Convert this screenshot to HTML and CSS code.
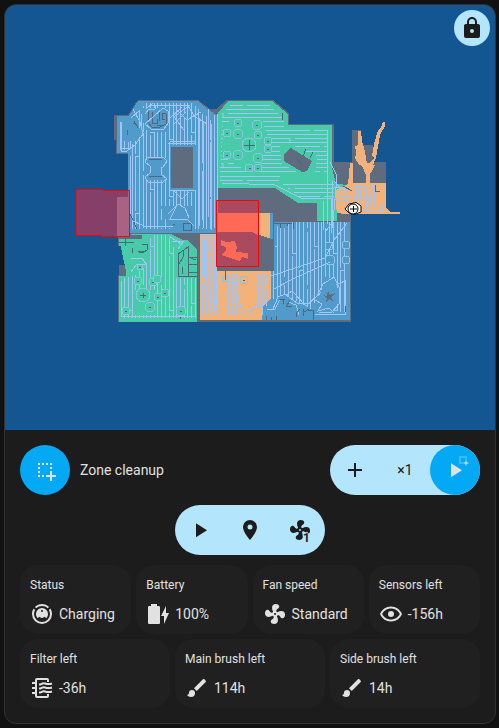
FILE: index.html
```html
<!DOCTYPE html>
<html lang="en">
<head>
<meta charset="utf-8">
<meta name="viewport" content="width=device-width, initial-scale=1">
<title>Vacuum map</title>
<link rel="stylesheet" href="styles.css">
</head>
<body>
<svg class="defs" aria-hidden="true">
  <symbol id="play" viewBox="0 0 24 24"><path d="M8,5.14V19.14L19,12.14L8,5.14Z"/></symbol>
  <symbol id="plus" viewBox="0 0 24 24"><path d="M19,13H13V19H11V13H5V11H11V5H13V11H19V13Z"/></symbol>
  <symbol id="lock" viewBox="0 0 24 24"><path d="M12,17A2,2 0 0,0 14,15C14,13.89 13.1,13 12,13A2,2 0 0,0 10,15A2,2 0 0,0 12,17M18,8A2,2 0 0,1 20,10V20A2,2 0 0,1 18,22H6A2,2 0 0,1 4,20V10C4,8.89 4.9,8 6,8H7V6A5,5 0 0,1 12,1A5,5 0 0,1 17,6V8H18M12,3A3,3 0 0,0 9,6V8H15V6A3,3 0 0,0 12,3Z"/></symbol>
  <symbol id="marker" viewBox="0 0 24 24"><path d="M12,11.5A2.5,2.5 0 0,1 9.5,9A2.5,2.5 0 0,1 12,6.5A2.5,2.5 0 0,1 14.5,9A2.5,2.5 0 0,1 12,11.5M12,2A7,7 0 0,0 5,9C5,14.25 12,22 12,22C12,22 19,14.25 19,9A7,7 0 0,0 12,2Z"/></symbol>
  <symbol id="fan" viewBox="0 0 24 24"><path d="M12,11A1,1 0 0,0 11,12A1,1 0 0,0 12,13A1,1 0 0,0 13,12A1,1 0 0,0 12,11M12.5,2C17,2 17.11,5.57 14.75,6.75C13.76,7.24 13.32,8.29 13.13,9.22C13.61,9.42 14.03,9.73 14.35,10.13C18.05,8.13 22.03,8.92 22.03,12.5C22.03,17 18.46,17.1 17.28,14.73C16.78,13.74 15.72,13.3 14.79,13.11C14.59,13.59 14.28,14 13.88,14.34C15.87,18.03 15.08,22 11.5,22C7,22 6.91,18.42 9.27,17.24C10.25,16.75 10.69,15.71 10.89,14.79C10.4,14.59 9.97,14.27 9.65,13.87C5.96,15.85 2,15.07 2,11.5C2,7 5.56,6.89 6.74,9.26C7.24,10.25 8.29,10.68 9.22,10.87C9.41,10.39 9.73,9.97 10.14,9.65C8.15,5.96 8.94,2 12.5,2Z"/></symbol>
  <symbol id="eye" viewBox="0 0 24 24"><path d="M12,9A3,3 0 0,1 15,12A3,3 0 0,1 12,15A3,3 0 0,1 9,12A3,3 0 0,1 12,9M12,4.5C17,4.5 21.27,7.61 23,12C21.27,16.39 17,19.5 12,19.5C7,19.5 2.73,16.39 1,12C2.73,7.61 7,4.5 12,4.5M3.18,12C4.83,15.36 8.24,17.5 12,17.5C15.76,17.5 19.17,15.36 20.82,12C19.17,8.64 15.76,6.5 12,6.5C8.24,6.5 4.83,8.64 3.18,12Z"/></symbol>
  <symbol id="brush" viewBox="0 0 24 24"><path d="M20.71,4.63L19.37,3.29C19,2.9 18.35,2.9 17.96,3.29L9,12.25L11.75,15L20.71,6.04C21.1,5.65 21.1,5 20.71,4.63M7,14A3,3 0 0,0 4,17C4,18.31 2.84,19 2,19C2.92,20.22 4.5,21 6,21A4,4 0 0,0 10,17A3,3 0 0,0 7,14Z"/></symbol>
  <symbol id="vacuum" viewBox="0 0 24 24"><path d="M12,2C14.65,2 17.19,3.06 19.07,4.93L17.65,6.35C16.15,4.85 14.12,4 12,4C9.88,4 7.84,4.84 6.35,6.35L4.93,4.93C6.81,3.06 9.35,2 12,2M3.66,6.5L5.11,7.94C4.39,9.17 4,10.57 4,12A8,8 0 0,0 12,20A8,8 0 0,0 20,12C20,10.57 19.61,9.17 18.88,7.94L20.34,6.5C21.42,8.12 22,10.04 22,12A10,10 0 0,1 12,22A10,10 0 0,1 2,12C2,10.04 2.58,8.12 3.66,6.5M12,6A6,6 0 0,1 18,12C18,13.59 17.37,15.12 16.24,16.24L14.83,14.83C14.08,15.58 13.06,16 12,16C10.94,16 9.92,15.58 9.17,14.83L7.76,16.24C6.63,15.12 6,13.59 6,12A6,6 0 0,1 12,6M12,8A1,1 0 0,0 11,9A1,1 0 0,0 12,10A1,1 0 0,0 13,9A1,1 0 0,0 12,8Z"/></symbol>
  <symbol id="battery" viewBox="0 0 24 24"><path d="M23,11H20V4L15,14H18V22M12.67,4H11V2H5V4H3.33A1.33,1.33 0 0,0 2,5.33V20.67C2,21.4 2.6,22 3.33,22H12.67C13.4,22 14,21.4 14,20.67V5.33A1.33,1.33 0 0,0 12.67,4Z"/></symbol>
  <symbol id="filter" viewBox="0 0 24 24"><g fill="none" stroke="currentColor" stroke-width="2"><path d="M18,6V4Q18,3 17,3H7Q6,3 6,4V20Q6,21 7,21H17Q18,21 18,20V18"/><path d="M2,7H6M2,12H6M2,17H6"/><path d="M9,8.500C12,8.500 12,6.500 15,7.500S19,8.500 22,7.500M9,12.500C12,12.500 12,10.500 15,11.500S19,12.500 22,11.500M9,16.500C12,16.500 12,14.500 15,15.500S19,16.500 22,15.500"/></g></symbol>
  <symbol id="select" viewBox="0 0 24 24"><path d="M5,5H7V7H5ZM9,5H11V7H9ZM13,5H15V7H13ZM17,5H19V7H17ZM5,9H7V11H5ZM17,9H19V11H17ZM5,13H7V15H5ZM5,17H7V19H5ZM9,17H11V19H9ZM17,13H19V17H23V19H19V23H17V19H13V17H17Z"/></symbol>
</svg>
<main class="card">
  <section class="map" aria-label="Map">
    <svg class="plan" viewBox="5 5 490 425" role="img" aria-label="Cleaned rooms, with two cleanup zones">
      <defs>
        <pattern id="v" width="41" height="57" patternUnits="userSpaceOnUse">
          <path class="track" d="M1.500,0V57M5.500,0V25M5.500,28V57M9.500,0V57M12.500,0V40M12.500,43V57M16.500,0V57M20.500,4V57M23.500,0V57M27.500,0V18M27.500,21V57M31.500,0V57M34.500,0V57M38.500,0V49M5,25.500H9M12,42.500H16M27,18.500H31"/>
        </pattern>
        <pattern id="h" width="67" height="25" patternUnits="userSpaceOnUse">
          <path class="track" d="M0,1.500H67M0,5.500H42M46,5.500H67M0,9.500H67M0,13.500H22M27,13.500H67M0,17.500H67M0,21.500H52M56,21.500H67M22,13V18"/>
        </pattern>
      </defs>
      <g shape-rendering="crispEdges">
        <path class="wall" d="M137,101L139,100H198L210,109H216L227,100H273L289,113V124H334V162H352V130H361V145H373V162H386V213H351V322H118V275H119V246H118V233H128V154H116V140H114V115H128Z"/>
        <path class="ocean" d="M118,154H127V233H118ZM117,246H126V265H117Z"/>
        <path class="blue" d="M138,101H198L209,110L218,116V233H128V153H117V116H129Z"/>
        <path class="green" d="M218,113L228,101H272L288,114V125H332V168L336,184L350,185L345,192H337V221H317V203H298L275,188H218Z"/>
        <path class="green" d="M119,239H126L132,234H171L183,240H187L197,249V322H119V276H126V246H119Z"/>
        <path class="orange" d="M200,234H217V271H271V320H200Z"/>
        <path class="blue" d="M273,222H350V320H262V307L271,298V274Z"/>
        <path class="orange" d="M336,190L348,184L350,163H353V183H386V208L391,212H400V214H337L336,205Z"/>
        <path class="orange" d="M358,131H361L362,141L364,147L366,158L367,163H370L374,158L372,156L374,144L378,130L381,127L383,122H385V126L380,135L376,158L373,165L370,171V183H366V175L363,168L359,163L357,158L355,146L358,145Z"/>
        <path class="orange" d="M357,151L355,158L359,165H375L371,173H365Z"/>
        <path fill="url(#v)" d="M139,110L147,103H192L211,120V229H132V161H129V150H120V122H129L138,124Z"/>
        <path fill="url(#v)" d="M151,235H168L176,252V278H196V318H123V278L132,276L146,266ZM201,234H215V274H269V315H201ZM277,226L293,222H347V312L276,308L273,300V277Z"/>
        <path fill="url(#h)" d="M222,113L230,105H269L284,119V129H328V174H281L278,184H220Z"/>
        <path fill="url(#h)" d="M279,181H334V200H303Z"/>
        <path class="bluefill" d="M142,108H169V129L166,132H148L144,128ZM145,158H167V180H145ZM129,117L144,133L132,144L121,139V119ZM168,145H196V190H168ZM160,206H194V229H170Z"/>
        <path class="wall" d="M171,147H193V188H171Z"/>
        <path class="gray" d="M148,111V122L152,127H160L166,124V114L162,113V119H165M152,112V123H157V119M157,125H164M159,112V121M149,159.500H162M149,176.500H162M134,121L138,128M127,130V135M133,123H136"/>
        <path class="gray" d="M183.500,223H191V230H183.500ZM173,224h2M126,205L131,216L137,229"/>
        <path class="track" d="M145,114L149,109H155M163,108L168,111V123L164,129H151L145,124ZM147,157H163L167,161L163,167H161V174L167,179L163,182H148L145,177L150,173V166L145,162ZM168,143.500H195M170,141L196,142M169,145V190H195M133,109L140,122L143,134L135,145L127,151H121V122M122,148H130V141M153,103L146,109M139,111L131,118M150,105H190L174,117L184,130M187,104L194,116L207,124M201,112L187,120L178,111M170,118L182,107M174,124L186,112M208,109V217M214,115V228M217,114V230M130,156V214M168,214L178,204L185,208L189,218M174,191L182,199L189,192M177,205L170,219H187L194,226M133,221L144,226H173M155,105V109M141,114V130M199,118V226M203,122V228M211,124V230"/>
        <path class="greenfill" d="M223,124L235,119L262,120L270,142L264,152L260,168L249,173L237,165L222,156ZM280,146L291,145L317,156L315,172L302,175L281,163ZM120,243H149V256H130L127,268L141,262L135,276H127ZM135,290H155V315H135ZM176,250H186V276H176Z"/>
        <path class="wall" d="M284,154L291,148L312,161L307,171L302,172L284,161ZM171,234H200V280H197V249L187,240H183ZM119,235H142V239H119Z"/>
        <g class="rings">
          <circle cx="227" cy="133" r="4"/><circle cx="238" cy="123" r="4"/><circle cx="238" cy="134" r="5"/><circle cx="257" cy="125" r="5"/><circle cx="258" cy="135" r="4"/><circle cx="268" cy="141" r="4"/><circle cx="268" cy="149" r="4"/><circle cx="227" cy="155" r="4"/><circle cx="238" cy="155" r="5"/><circle cx="249" cy="145" r="7"/><circle cx="258" cy="158" r="5"/><circle cx="249" cy="168" r="4"/><circle cx="258" cy="168" r="4"/>
          <circle cx="143" cy="295" r="7"/><circle cx="138" cy="281" r="4"/><circle cx="153" cy="282" r="4"/><circle cx="158" cy="297" r="4"/><circle cx="165" cy="293" r="4"/><circle cx="150" cy="307" r="5"/><circle cx="126" cy="311" r="4"/><circle cx="181" cy="311" r="5"/><circle cx="140" cy="267" r="3"/><circle cx="157" cy="279" r="4"/>
        </g>
        <g class="rings warm"><circle cx="225" cy="279" r="3"/><circle cx="244" cy="280" r="4"/></g>
        <g class="rings cool"><circle cx="329" cy="246" r="4"/><circle cx="330" cy="260" r="5"/><circle cx="346" cy="245" r="4"/><circle cx="346" cy="260" r="4"/></g>
        <path class="gray" d="M249.500,140V150M244,145.500H255M226,133.500h2M237,123.500h2M237,134.500h2M256,125.500h2M257,135.500h2M267,141.500h2M267,149.500h2M226,155.500h2M237,155.500h2M257,158.500h2M249,168.500h2M257,168.500h2M306,149L303,156M313,152L310,158M296,158L303,166M282.500,113V120M343,186L352,191M119,242.500H134M125,239V246M138,251H144V252M142,244H147V250L144,252H139M132,248V253M178,254V277M178,254L188,247V257L196,260M183,251V257L179,264M188.500,255V276M189,257.500H197M182,266.500V274M189,264.500H197M178,276.500H197M189,272.500H197M143.500,293V298M140,295.500H146M137,281.500h2M152,282.500h2M157,297.500h2M164,293.500h2M149,307.500h2M125,311.500h2M180,311.500h2M180.500,316V319M225.500,270V280M243,280.500h2M139,267.500h2"/>
        <path class="track" d="M131,258H142L146,264L136,265L131,272M172,241H184L178,249M169,236L181,244"/>
        <path class="track" d="M222,183L275,185L301,198H331V233M321,130H327V224M332,181V228M323,201V230M330,162L337,176L333,221L326,231M334,181L348,196M337,193L352,204M334,187H343L349,192M335,199L345,202M353,186V206M356,185V203M360,186V197H357V207M363,185V210M366,188V211H382V204M370,194V206M374,184V207M379,186V207M353,186H375M341,196L366,200M271,276L325,258L334,240L347,223M274,289L293,279L330,262M273,314L281,299L292,291L306,306L325,289L345,281V314H278M204,240V279M209,234V316M216,239V306M200,280L219,313M232,274L243,315M121,281V316H196"/>
        <path class="gray" d="M375.500,185V191H380"/>
        <path class="bluefill" d="M275,298L284,294L296,301L311,309L320,294L326,280L333,277L340,294L336,310L313,315L296,320H270L263,309Z"/>
        <path class="track" d="M273,309L278,297L285,294L297,303H309L317,296L323,284L334,277L340,289L339,304L332,312H319M288,302L296,305L299,315M267,309H275L280,299M315,300L322,304L318,311L329,308L334,313"/>
        <path class="wall" d="M323,295L327,296L328,291L330,295L335,293L331,297L333,301L329,299L326,303L327,298Z"/>
        <path class="gray" d="M279,299H285M283,300V304M286,306H292M290,300L286,307M296,312V317M300,309L296,313M303,309V316M309,309L304,312M313,310V320M308,310H313M271,317V321M276,316V321M266,316V320M251,309V320M274,223H292M280,223V228M287,223V226M293,222V229M337,213L341,214M345,306V312"/>
        <path class="orangefill" d="M245,307L253,302L261,311V320H248Z"/>
        <path class="track" d="M249,314L257,304L263,310M245,309L254,316"/>
        <path class="wall" d="M218,188H273L297,204H317V221H274V271H219V233H218Z"/>
        <path class="orange" d="M217,213H271V239L252,232H217Z"/>
        <path class="blue" d="M270,213H273V239H270Z"/>
      </g>
      <path class="ghost" d="M117,197H129V236H117Z"/>
      <path class="zone" d="M76,189.500H103V190.500H129.500V236.500H102V235.500H76Z"/>
      <path class="zone" d="M216.500,200.500H258.500V266.500H216.500Z"/>
      <path class="zonefloor" shape-rendering="crispEdges" d="M219,214H258V235L252,232H219ZM221,240L226,242L235,241L237,247L236,252L248,253V259L242,257L240,261L230,258L221,255L226,251V247L221,246Z"/>
      <g class="robot"><path d="M349,204L356,202.500L361,206V212L356,214L349,213L345,209Z"/><circle cx="353" cy="209" r="5"/><path class="cross" d="M350,209H357M353.500,206V212"/></g>
    </svg>
    <button class="lock" aria-label="Lock map"><svg class="icon"><use href="#lock"/></svg></button>
  </section>
  <section class="controls">
    <div class="bar">
      <div class="mode">
        <button class="round" aria-label="Select zone"><svg class="icon"><use href="#select"/></svg></button>
        <span>Zone cleanup</span>
      </div>
      <div class="pill">
        <button class="cell" aria-label="Add zone"><svg class="icon"><use href="#plus"/></svg></button>
        <button class="cell">×1</button>
        <button class="round" aria-label="Start zone cleanup"><svg class="icon"><use href="#play"/></svg><svg class="mini" aria-hidden="true"><use href="#select"/></svg></button>
      </div>
    </div>
    <div class="pill center">
      <button class="cell" aria-label="Start"><svg class="icon"><use href="#play"/></svg></button>
      <button class="cell" aria-label="Locate"><svg class="icon"><use href="#marker"/></svg></button>
      <button class="cell" aria-label="Fan speed 1"><svg class="icon"><use href="#fan"/></svg><span class="level">1</span></button>
    </div>
    <div class="tiles">
      <div class="row">
        <div class="tile"><div class="name">Status</div><div class="value"><svg class="icon"><use href="#vacuum"/></svg>Charging</div></div>
        <div class="tile"><div class="name">Battery</div><div class="value"><svg class="icon"><use href="#battery"/></svg>100%</div></div>
        <div class="tile"><div class="name">Fan speed</div><div class="value"><svg class="icon"><use href="#fan"/></svg>Standard</div></div>
        <div class="tile"><div class="name">Sensors left</div><div class="value"><svg class="icon"><use href="#eye"/></svg>-156h</div></div>
      </div>
      <div class="row">
        <div class="tile"><div class="name">Filter left</div><div class="value"><svg class="icon"><use href="#filter"/></svg>-36h</div></div>
        <div class="tile"><div class="name">Main brush left</div><div class="value"><svg class="icon"><use href="#brush"/></svg>114h</div></div>
        <div class="tile"><div class="name">Side brush left</div><div class="value"><svg class="icon"><use href="#brush"/></svg>14h</div></div>
      </div>
    </div>
  </section>
</main>
</body>
</html>
```
FILE: styles.css
```css
* { box-sizing: border-box; }
body {
  margin: 0;
  padding: 4px 3px 4px 4px;
  background: #111;
  color: #e1e1e1;
  font: 14px/20px Roboto, sans-serif;
}
.defs { position: absolute; width: 0; height: 0; }
.card {
  overflow: hidden;
  border: 1px solid #333;
  border-radius: 12px;
  background: #1c1c1c;
}
button {
  border: 0;
  padding: 0;
  background: none;
  color: #1c1c1c;
  font: inherit;
  display: flex;
  align-items: center;
  justify-content: center;
}
.icon { width: 24px; height: 24px; fill: currentColor; flex: none; }

.map { position: relative; background: #145692; }
.plan { display: block; width: 100%; height: auto; }
.lock {
  position: absolute;
  top: 5px;
  right: 5px;
  width: 36px;
  height: 36px;
  border-radius: 50%;
  background: #b3e5fc;
}

.wall { fill: #5f6c7f; }
.ocean { fill: #145692; }
.blue, .bluefill { fill: #519bcb; }
.green, .greenfill { fill: #47cba9; }
.orange, .orangefill { fill: #f3b27a; }
.track { fill: none; stroke: #a0c6f8; stroke-width: 1; }
.gray { fill: none; stroke: #4f667b; stroke-width: 1; }
.rings { fill: #47cba9; stroke: #8cc6e4; stroke-width: 1; }
.warm { fill: #f3b27a; }
.cool { fill: #519bcb; }
.zone { fill: #f82840; fill-opacity: .5; stroke: #f00; stroke-width: 1; }
.ghost { fill: #5c9cc8; }
.zonefloor { fill: #ff6a57; }
.robot { fill: #fff; stroke: #000; stroke-width: 1; }
.cross { stroke-width: 1; }

.controls {
  display: flex;
  flex-direction: column;
  gap: 10px;
  padding: 15px;
}
.bar { display: flex; align-items: center; justify-content: space-between; }
.mode { display: flex; align-items: center; gap: 10px; }
.round {
  position: relative;
  width: 50px;
  height: 50px;
  border-radius: 50%;
  background: #03a9f4;
  color: #e1e1e1;
}
.pill { display: flex; border-radius: 25px; background: #b3e5fc; }
.center { align-self: center; }
.cell { position: relative; width: 50px; height: 50px; }
.mini { position: absolute; top: 9px; right: 11px; width: 12px; height: 12px; fill: #d4f0fd; }
.level {
  position: absolute;
  right: 15px;
  bottom: 11px;
  font-size: 12px;
  line-height: 12px;
  font-weight: 700;
  text-shadow: -1px 0 #b3e5fc, 1px 0 #b3e5fc, 0 -1px #b3e5fc, -1px -1px #b3e5fc, -1px 1px #b3e5fc;
}

.tiles { display: flex; flex-direction: column; gap: 5px; }
.row { display: flex; gap: 5px; }
.tile {
  flex: 1;
  padding: 10px;
  border-radius: 18px;
  background: #202020;
}
.name { font-size: 12px; line-height: 20px; }
.value { display: flex; align-items: center; gap: 5px; height: 29px; padding-top: 9px; }
```
